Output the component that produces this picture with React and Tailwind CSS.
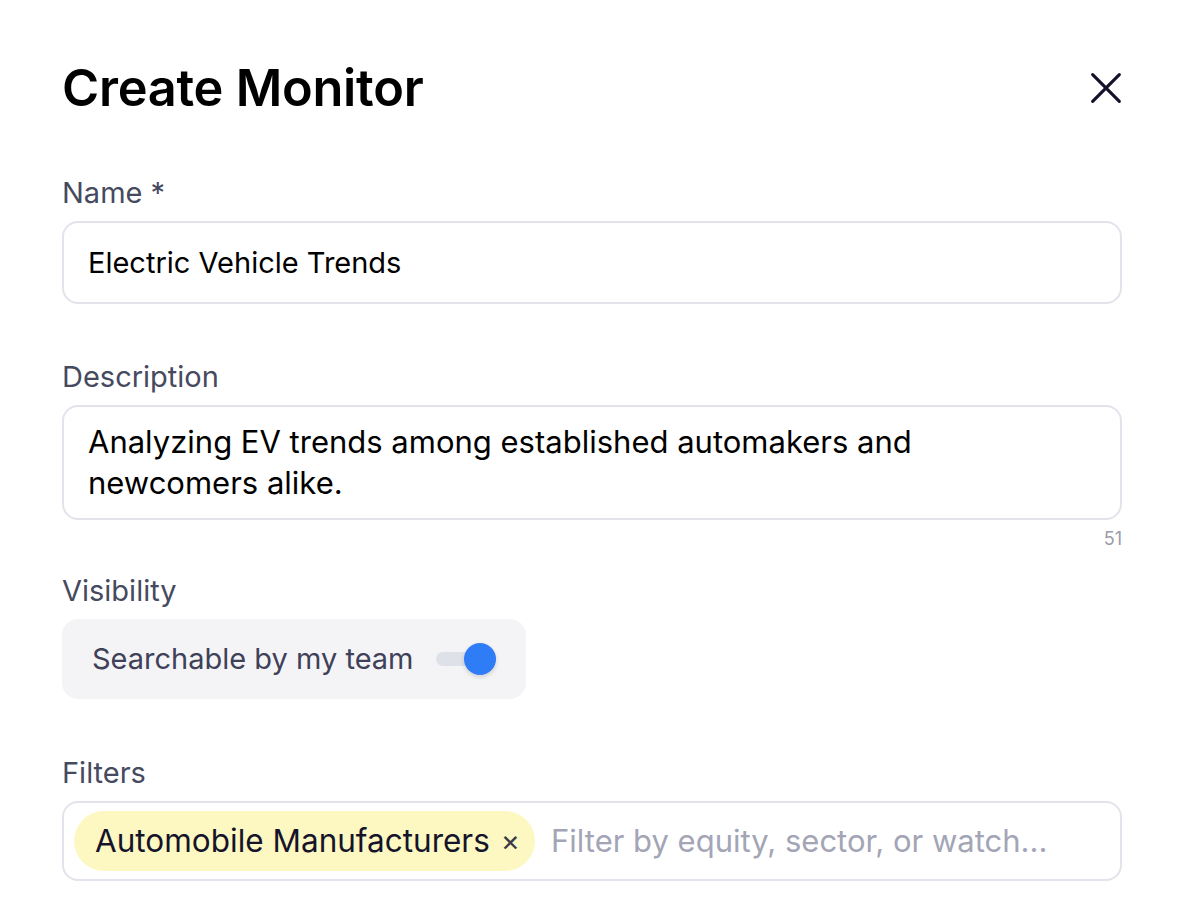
import React, { useState } from "react";

export default function App() {
  const [name, setName] = useState("Electric Vehicle Trends");
  const [desc, setDesc] = useState(
    "Analyzing EV trends among established automakers and newcomers alike."
  );
  const [searchable, setSearchable] = useState(true);

  return (
    <div
      className="min-h-screen w-full bg-white"
      style={{ fontFamily: "Inter, 'Noto Sans', sans-serif" }}
    >
      <div className="px-[62px] pt-[58px]">
        {/* Header */}
        <div className="flex items-center justify-between">
          <h1 className="text-[50.5px] leading-[60px] font-semibold tracking-[-0.005em] text-black">
            Create Monitor
          </h1>
          <button className="mr-[-4px] flex h-[40px] w-[40px] items-center justify-center text-[#14112b]">
            <svg width="40" height="40" viewBox="0 0 24 24" fill="none">
              <path
                d="M4 4L20 20M20 4L4 20"
                stroke="currentColor"
                strokeWidth="1.9"
                strokeLinecap="round"
              />
            </svg>
          </button>
        </div>

        {/* Name */}
        <div className="mt-[57px]">
          <label className="block text-[29px] leading-[36px] text-[#464a5f]">
            Name *
          </label>
          <input
            value={name}
            onChange={(e) => setName(e.target.value)}
            className="mt-[10px] h-[83px] w-full rounded-[16px] border-2 border-[#e3e3eb] px-[24px] text-[29px] text-black outline-none"
          />
        </div>

        {/* Description */}
        <div className="mt-[55px]">
          <label className="block text-[29px] leading-[36px] text-[#464a5f]">
            Description
          </label>
          <textarea
            value={desc}
            onChange={(e) => setDesc(e.target.value)}
            rows={2}
            className="mt-[10px] block h-[115px] w-full resize-none rounded-[16px] border-2 border-[#e3e3eb] pl-[24px] pr-[120px] py-[14px] text-[31px] leading-[41px] text-black outline-none"
          />
          <div className="mt-[8px] text-right text-[18px] leading-[22px] text-[#9a9cab]">
            {120 - desc.length}
          </div>
        </div>

        {/* Visibility */}
        <div className="mt-[23px]">
          <label className="block text-[29px] leading-[36px] text-[#464a5f]">
            Visibility
          </label>
          <div className="mt-[10px] inline-flex h-[80px] items-center gap-[22px] rounded-[16px] bg-[#f4f4f7] pl-[30px] pr-[28px]">
            <span className="text-[29px] text-[#3e4158]">
              Searchable by my team
            </span>
            <button
              onClick={() => setSearchable(!searchable)}
              className="relative flex h-[34px] w-[62px] items-center"
            >
              <span className="block h-[14px] w-[60px] rounded-full bg-[#dfe1e8]" />
              <span
                className={
                  "absolute top-[1px] h-[32px] w-[32px] rounded-full shadow-[0_2px_4px_rgba(0,0,0,0.15)] " +
                  (searchable ? "left-[28px] bg-[#2f7df6]" : "left-0 bg-white")
                }
              />
            </button>
          </div>
        </div>

        {/* Filters */}
        <div className="mt-[56px]">
          <label className="block text-[29px] leading-[36px] text-[#464a5f]">
            Filters
          </label>
          <div className="mt-[10px] flex h-[80px] w-full items-center gap-[16px] rounded-[16px] border-2 border-[#e3e3eb] px-[10px]">
            <span className="inline-flex h-[60px] items-center gap-[11px] rounded-full bg-[#fdf8c2] pl-[21px] pr-[15px] text-[31.5px] text-[#15142a]">
              Automobile Manufacturers
              <span className="text-[29px] text-[#3a3a4a]">×</span>
            </span>
            <input
              placeholder="Filter by equity, sector, or watch..."
              className="min-w-0 flex-1 bg-transparent text-[31px] text-black placeholder-[#a3a5b6] outline-none"
            />
          </div>
        </div>
      </div>
    </div>
  );
}
